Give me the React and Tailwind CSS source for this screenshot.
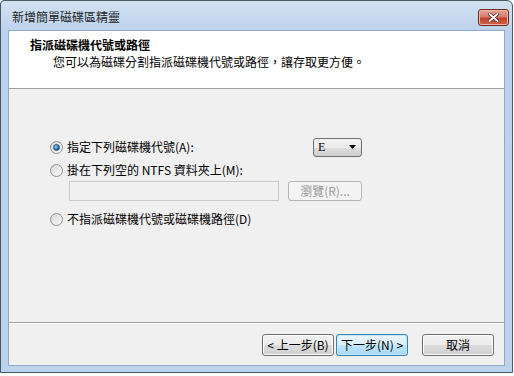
import React from "react";

const font = { fontFamily: '"Noto Sans CJK TC", "Noto Sans", sans-serif' };

const Radio = ({ checked }) => (
  <span className="w-[13px] h-[13px] rounded-full border border-[#8e8f8f] bg-gradient-to-br from-[#d6d6d6] to-[#fbfbfb] flex items-center justify-center shrink-0">
    {checked && (
      <span className="w-[7px] h-[7px] rounded-full bg-[radial-gradient(circle_at_35%_35%,#9fd2f4,#1b5b95_70%)] border border-[#1f4f7f]" />
    )}
  </span>
);

const Button = ({ children, primary, className = "" }) => (
  <button
    className={`h-[22px] rounded-[3px] border text-[12px] leading-none text-black flex items-center justify-center ${
      primary
        ? "border-[#3c7fb1] bg-[linear-gradient(#eaf6fd_0%,#d9f0fc_50%,#bee6fd_50%,#a7d9f5_100%)] shadow-[inset_0_0_0_1px_#c7e9fa]"
        : "border-[#707070] bg-[linear-gradient(#f2f2f2_0%,#ebebeb_50%,#dddddd_50%,#cfcfcf_100%)] shadow-[inset_0_0_0_1px_#fcfcfc]"
    } ${className}`}
  >
    {children}
  </button>
);

export default function App() {
  return (
    <div className="w-[514px] h-[376px] bg-white relative overflow-hidden" style={font}>
      {/* window frame */}
      <div className="w-[513px] h-[373px] border border-[#4a5866] rounded-tr-[6px] rounded-tl-[4px] bg-[linear-gradient(#d3e2f3,#bcd2ec_30px,#bcd3ec)] flex flex-col px-[7px] pb-[6px]">
        {/* title bar */}
        <div className="h-[29px] flex items-center justify-between shrink-0">
          <span className="text-[12px] text-[#1e1e1e] pl-[4px] pt-[2px]">新增簡單磁碟區精靈</span>
          <button className="w-[31px] h-[17px] -mr-[4px] mt-[4px] rounded-[3px] border border-[#6e2a20] bg-[linear-gradient(#e7a296_0%,#d47e6e_45%,#c0412b_55%,#d2654c_100%)] flex items-center justify-center shadow-[inset_0_0_0_1px_#f0b8ad]">
            <svg width="11" height="9" viewBox="0 0 11 9">
              <path d="M1.5 1 L9.5 8 M9.5 1 L1.5 8" stroke="#3b1410" strokeWidth="3.2" strokeLinecap="round" />
              <path d="M1.5 1 L9.5 8 M9.5 1 L1.5 8" stroke="#ffffff" strokeWidth="2" strokeLinecap="round" />
            </svg>
          </button>
        </div>

        {/* client area */}
        <div className="flex-1 flex flex-col border border-[#8fa9c6] bg-[#f0f0f0]">
          {/* header */}
          <div className="h-[58px] bg-white border-b border-[#a0a0a0] shrink-0 pt-[6px]">
            <div className="pl-[21px] text-[12px] font-bold leading-[15px] text-black">指派磁碟機代號或路徑</div>
            <div className="pl-[44px] pt-[2px] text-[12px] leading-[15px] text-black">
              您可以為磁碟分割指派磁碟機代號或路徑，讓存取更方便。
            </div>
          </div>

          {/* body */}
          <div className="flex-1 border-b border-[#a0a0a0] shadow-[0_1px_0_#ffffff] pt-[48px] pl-[41px] pr-[142px] text-[12px] text-black">
            <div className="flex items-center h-[20px]">
              <Radio checked />
              <span className="ml-[4px]">指定下列磁碟機代號(A):</span>
              <div className="ml-auto w-[49px] h-[19px] rounded-[3px] border border-[#707070] bg-[linear-gradient(#f2f2f2_0%,#ebebeb_50%,#dddddd_50%,#cfcfcf_100%)] flex items-center justify-between pl-[4px] pr-[5px]">
                <span className="text-[12px] leading-none" style={{ fontFamily: '"Liberation Serif", serif' }}>E</span>
                <svg width="7" height="4" viewBox="0 0 7 4">
                  <path d="M0 0 H7 L3.5 4 Z" fill="#000" />
                </svg>
              </div>
            </div>
            <div className="flex items-center h-[20px] mt-[3px]">
              <Radio />
              <span className="ml-[4px]">掛在下列空的 NTFS 資料夾上(M):</span>
            </div>
            <div className="flex items-center mt-[1px] pl-[19px]">
              <div className="w-[210px] h-[20px] border border-[#c9c9c9] bg-[#f0f0f0]" />
              <div className="ml-[9px] w-[74px] h-[20px] rounded-[3px] border border-[#b4b4b4] bg-[#f4f4f4] text-[#9a9a9a] flex items-center justify-center text-[12px]">
                瀏覽(R)...
              </div>
            </div>
            <div className="flex items-center h-[20px] mt-[8px]">
              <Radio />
              <span className="ml-[4px]">不指派磁碟機代號或磁碟機路徑(D)</span>
            </div>
          </div>

          {/* buttons */}
          <div className="h-[42px] shrink-0 flex items-center pl-[253px] pt-[1px]">
            <Button className="w-[72px]">&lt; 上一步(B)</Button>
            <Button primary className="w-[72px] ml-[2px]">下一步(N) &gt;</Button>
            <Button className="w-[72px] ml-[14px]">取消</Button>
          </div>
        </div>
      </div>
    </div>
  );
}
